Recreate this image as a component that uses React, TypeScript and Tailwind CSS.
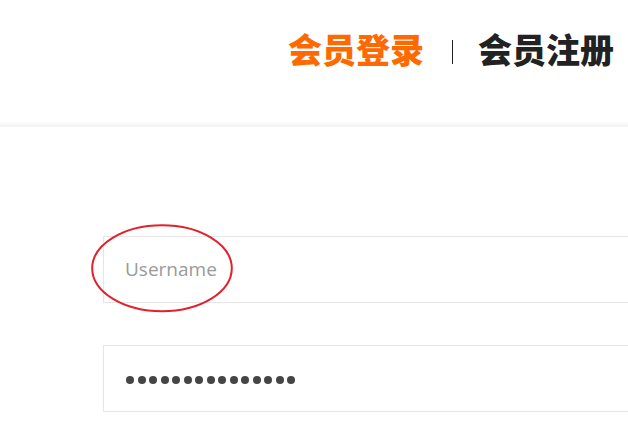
export default function App() {
	return (
		<div className="w-[628px] h-[430px] overflow-hidden bg-white relative font-['Open_Sans','Noto_Sans_CJK_SC',sans-serif]">
			<header className="h-[127px] flex flex-col">
				<div className="flex-1 flex justify-end items-start pt-[32px] pr-[14px] font-['Noto_Sans_CJK_SC',sans-serif] font-black text-[34px] leading-[34px]">
					<span className="text-[#ff6a00]">会员登录</span>
					<span className="w-px h-[24px] bg-[#222] mt-[8px] ml-[28px] mr-[25px]"></span>
					<span className="text-[#222]">会员注册</span>
				</div>
				<div className="h-[6px] bg-gradient-to-b from-white to-[#f1f1f1]"></div>
			</header>

			<div className="pt-[109px] pl-[103px] flex flex-col gap-[42px]">
				<div className="w-[700px] h-[67px] border border-[#e6e6e6] flex items-center pl-[21px]">
					<span className="text-[19px] text-[#9a9a9a]">Username</span>
				</div>
				<div className="w-[700px] h-[67px] border border-[#e6e6e6] flex items-center pl-[22px] pt-[2px] gap-[3.5px]">
					{Array.from({ length: 15 }).map((_, i) => (
						<span key={i} className="w-2 h-2 rounded-full bg-[#454545]"></span>
					))}
				</div>
			</div>

			<svg className="absolute left-[90px] top-[223px]" width="145" height="91" viewBox="0 0 145 91">
				<ellipse cx="72" cy="45.3" rx="69.8" ry="43" fill="none" stroke="#e3202c" strokeWidth="2" />
			</svg>
		</div>
	);
}
